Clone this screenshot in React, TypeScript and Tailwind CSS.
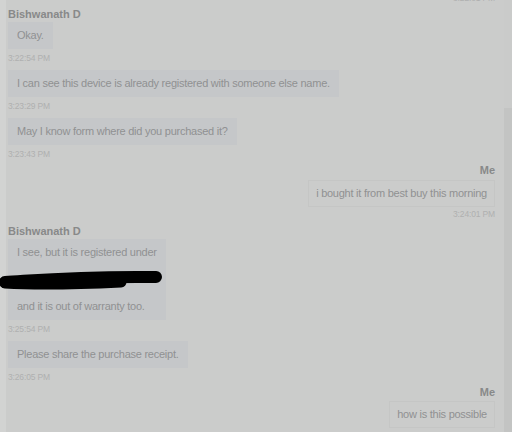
import type { ReactNode } from 'react';

const Name = ({ children, right, className = '' }: { children: ReactNode; right?: boolean; className?: string }) => (
    <div className={`text-[11px] leading-[13px] font-bold text-[#888989] ${right ? 'text-right' : ''} ${className}`}>{children}</div>
);

const Stamp = ({ children, right, className = '' }: { children: ReactNode; right?: boolean; className?: string }) => (
    <div className={`text-[8.5px] leading-[9px] tracking-[-0.15px] text-[#afb0b0] ${right ? 'text-right' : ''} ${className}`}>{children}</div>
);

const Bubble = ({ children, right }: { children: ReactNode; right?: boolean }) => (
    <div
        className={`w-fit text-[11px] leading-[17px] tracking-[-0.25px] text-[#909192] ${
            right ? 'ml-auto border border-[#c5c6c5] px-[7px] py-[4px]' : 'bg-[#c5c7c9] px-[9px] py-[5px]'
        }`}
    >
        {children}
    </div>
);

export default function App() {
    return (
        <div className="flex h-[432px] w-[512px] overflow-hidden bg-[#cbcccb] font-['Liberation_Sans',Arial,sans-serif]">
            <div className="w-[6px] shrink-0 bg-[#d2d3d2]" />
            <div className="flex-1 pl-[2px] pr-[9px]">
                <Stamp right className="-mt-[6px]">3:22:01 PM</Stamp>

                <Name className="mt-[5px]">Bishwanath D</Name>
                <div className="mt-[1px]">
                    <Bubble>Okay.</Bubble>
                    <Stamp className="mt-[5px]">3:22:54 PM</Stamp>
                </div>
                <div className="mt-[7px]">
                    <Bubble>I can see this device is already registered with someone else name.</Bubble>
                    <Stamp className="mt-[5px]">3:23:29 PM</Stamp>
                </div>
                <div className="mt-[7px]">
                    <Bubble>May I know form where did you purchased it?</Bubble>
                    <Stamp className="mt-[5px]">3:23:43 PM</Stamp>
                </div>

                <Name right className="mt-[5px]">Me</Name>
                <div className="mt-[3px]">
                    <Bubble right>i bought it from best buy this morning</Bubble>
                    <Stamp right className="mt-[3px]">3:24:01 PM</Stamp>
                </div>

                <Name className="mt-[6px]">Bishwanath D</Name>
                <div className="mt-[1px]">
                    <div className="w-fit bg-[#c5c7c9] px-[9px] py-[5px] text-[11px] leading-[17px] tracking-[-0.25px] text-[#909192]">
                        <div>I see, but it is registered under</div>
                        <div className="relative h-[37px]">
                            <svg className="absolute -left-[18px] top-[4px]" width="172" height="28" viewBox="0 0 172 28">
                                <path
                                    d="M6 17 C40 15, 80 11, 157 12"
                                    fill="none"
                                    stroke="#000"
                                    strokeWidth="12"
                                    strokeLinecap="round"
                                />
                                <path d="M6 18 C40 20, 80 19, 122 17" fill="none" stroke="#000" strokeWidth="11" strokeLinecap="round" />
                            </svg>
                        </div>
                        <div>and it is out of warranty too.</div>
                    </div>
                    <Stamp className="mt-[5px]">3:25:54 PM</Stamp>
                </div>
                <div className="mt-[7px]">
                    <Bubble>Please share the purchase receipt.</Bubble>
                    <Stamp className="mt-[5px]">3:26:05 PM</Stamp>
                </div>

                <Name right className="mt-[4px]">Me</Name>
                <div className="mt-[2px]">
                    <Bubble right>how is this possible</Bubble>
                </div>
            </div>
            <div className="flex w-[8px] shrink-0 flex-col">
                <div className="h-[108px] bg-[#cacbca]" />
                <div className="flex-1 bg-[#c3c4c3]" />
            </div>
        </div>
    );
}
